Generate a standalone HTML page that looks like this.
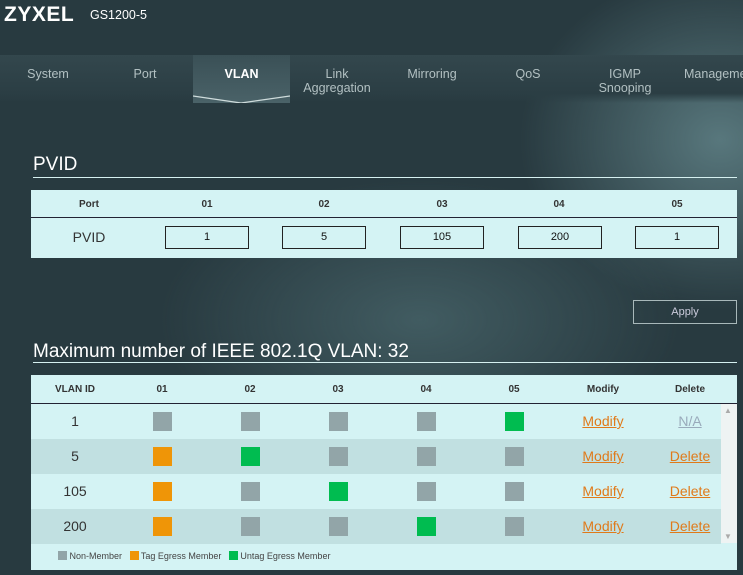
<!DOCTYPE html>
<html><head><style>
*{margin:0;padding:0;box-sizing:border-box}
body{width:743px;height:575px;overflow:hidden;font-family:"Liberation Sans",sans-serif;position:relative;
background:radial-gradient(ellipse 200px 170px at 720px 140px,rgba(120,160,165,.6),transparent),radial-gradient(ellipse 260px 140px at 420px 320px,rgba(90,125,130,.5),transparent),#283a40;}
.abs{position:absolute}
.logo{left:4px;top:3px;color:#fff;font-size:21px;font-weight:bold;letter-spacing:0.5px}
.model{left:90px;top:8px;color:#fff;font-size:12.5px}
.nav{left:0;top:55px;width:743px;height:48px;background:linear-gradient(#33474d,#2b3e44 80%,rgba(43,62,68,0))}
.nav div{position:absolute;top:12px;color:#b2c0c2;font-size:12.5px;text-align:center;line-height:14px}
.vtab{left:193px;top:55px;width:97px;height:48px;background:linear-gradient(#3a5056,#4a6268)}
h2{position:absolute;left:33px;color:#fff;font-weight:normal;font-size:19px}
.hl{position:absolute;left:33px;width:704px;height:1px;background:#d6f0f0}
.tbl{position:absolute;left:31px;width:706px;background:#d4f3f4}
.th{position:absolute;font-size:10px;font-weight:bold;color:#333;text-align:center;width:80px}
.inp{position:absolute;top:36px;width:84px;height:23px;border:1px solid #222;font-size:11px;text-align:center;line-height:21px;color:#111}
.row{position:absolute;left:0;width:690px;height:35px}
.c{position:absolute;font-size:14px;color:#333;width:80px;text-align:center;top:9px}
.sq{position:absolute;top:8px;width:19px;height:19px}
.g{background:#92a5a8}.o{background:#ef9507}.n{background:#00bc50}
.lk{position:absolute;top:9px;font-size:14px;color:#e07a1a;text-decoration:underline;width:80px;text-align:center}
</style></head><body>
<div class="abs logo">ZYXEL</div><div class="abs model">GS1200-5</div>
<div class="abs nav">
<div style="left:18px;width:60px">System</div>
<div style="left:115px;width:60px">Port</div>
<div style="left:292px;width:90px">Link<br>Aggregation</div>
<div style="left:402px;width:60px">Mirroring</div>
<div style="left:498px;width:60px">QoS</div>
<div style="left:590px;width:70px">IGMP<br>Snooping</div>
<div style="left:684px;width:80px;text-align:left">Management</div>
</div>
<div class="abs vtab"><svg width="97" height="48" style="position:absolute;left:0;top:0"><polyline points="0,41 48,48 97,41" fill="none" stroke="#cfdcdc" stroke-width="1.3"/></svg><div style="position:absolute;top:12px;width:97px;text-align:center;color:#fff;font-weight:bold;font-size:12.5px">VLAN</div></div>

<h2 style="top:154px">PVID</h2><div class="hl" style="top:177px"></div>
<div class="tbl" style="top:190px;height:68px">
<div style="position:absolute;left:0;top:27px;width:706px;height:1px;background:#223"></div>
<div class="th" style="left:18px;top:9px">Port</div>
<div class="th" style="left:136px;top:9px">01</div><div class="th" style="left:253px;top:9px">02</div><div class="th" style="left:371px;top:9px">03</div><div class="th" style="left:488px;top:9px">04</div><div class="th" style="left:606px;top:9px">05</div>
<div style="position:absolute;left:18px;top:39px;width:80px;text-align:center;font-size:14px;color:#333">PVID</div>
<div class="inp" style="left:134px">1</div><div class="inp" style="left:251px">5</div><div class="inp" style="left:369px">105</div><div class="inp" style="left:487px">200</div><div class="inp" style="left:604px">1</div>
</div>
<div class="abs" style="left:633px;top:300px;width:104px;height:24px;border:1px solid #a8b8ba;color:#ccd;font-size:11px;text-align:center;line-height:22px">Apply</div>

<h2 style="top:341px">Maximum number of IEEE 802.1Q VLAN: 32</h2><div class="hl" style="top:362px"></div>
<div class="tbl" style="top:375px;height:195px">
<div class="th" style="left:4px;top:9px">VLAN ID</div>
<div class="th" style="left:91px;top:9px">01</div><div class="th" style="left:179px;top:9px">02</div><div class="th" style="left:267px;top:9px">03</div><div class="th" style="left:355px;top:9px">04</div><div class="th" style="left:443px;top:9px">05</div><div class="th" style="left:532px;top:9px">Modify</div><div class="th" style="left:619px;top:9px">Delete</div>
<div style="position:absolute;left:0;top:28px;width:706px;height:1px;background:#223"></div>
<div style="position:absolute;left:689px;top:29px;width:17px;height:139px;background:#eef3f3"><div style="position:absolute;left:4px;top:2px;color:#aaa;font-size:8px">▲</div><div style="position:absolute;left:4px;bottom:2px;color:#aaa;font-size:8px">▼</div></div>
<div class="row" style="top:29px;background:#d4f3f4"><div class="c" style="left:4px">1</div>
<div class="sq g" style="left:122px"></div><div class="sq g" style="left:210px"></div><div class="sq g" style="left:298px"></div><div class="sq g" style="left:386px"></div><div class="sq n" style="left:474px"></div>
<div class="lk" style="left:532px">Modify</div><div class="lk" style="left:619px;color:#9ab">N/A</div></div>
<div class="row" style="top:64px;background:#c1e0e1"><div class="c" style="left:4px">5</div>
<div class="sq o" style="left:122px"></div><div class="sq n" style="left:210px"></div><div class="sq g" style="left:298px"></div><div class="sq g" style="left:386px"></div><div class="sq g" style="left:474px"></div>
<div class="lk" style="left:532px">Modify</div><div class="lk" style="left:619px">Delete</div></div>
<div class="row" style="top:99px;background:#d4f3f4"><div class="c" style="left:4px">105</div>
<div class="sq o" style="left:122px"></div><div class="sq g" style="left:210px"></div><div class="sq n" style="left:298px"></div><div class="sq g" style="left:386px"></div><div class="sq g" style="left:474px"></div>
<div class="lk" style="left:532px">Modify</div><div class="lk" style="left:619px">Delete</div></div>
<div class="row" style="top:134px;background:#c1e0e1"><div class="c" style="left:4px">200</div>
<div class="sq o" style="left:122px"></div><div class="sq g" style="left:210px"></div><div class="sq g" style="left:298px"></div><div class="sq n" style="left:386px"></div><div class="sq g" style="left:474px"></div>
<div class="lk" style="left:532px">Modify</div><div class="lk" style="left:619px">Delete</div></div>
<div style="position:absolute;top:176px;left:27px;font-size:9px;color:#444;white-space:nowrap">
<span style="display:inline-block;width:9px;height:9px;background:#92a5a8;vertical-align:-1px"></span> Non-Member &nbsp;&nbsp;<span style="display:inline-block;width:9px;height:9px;background:#ef9507;vertical-align:-1px"></span> Tag Egress Member &nbsp;&nbsp;<span style="display:inline-block;width:9px;height:9px;background:#00bc50;vertical-align:-1px"></span> Untag Egress Member</div>
</div>
</body></html>
